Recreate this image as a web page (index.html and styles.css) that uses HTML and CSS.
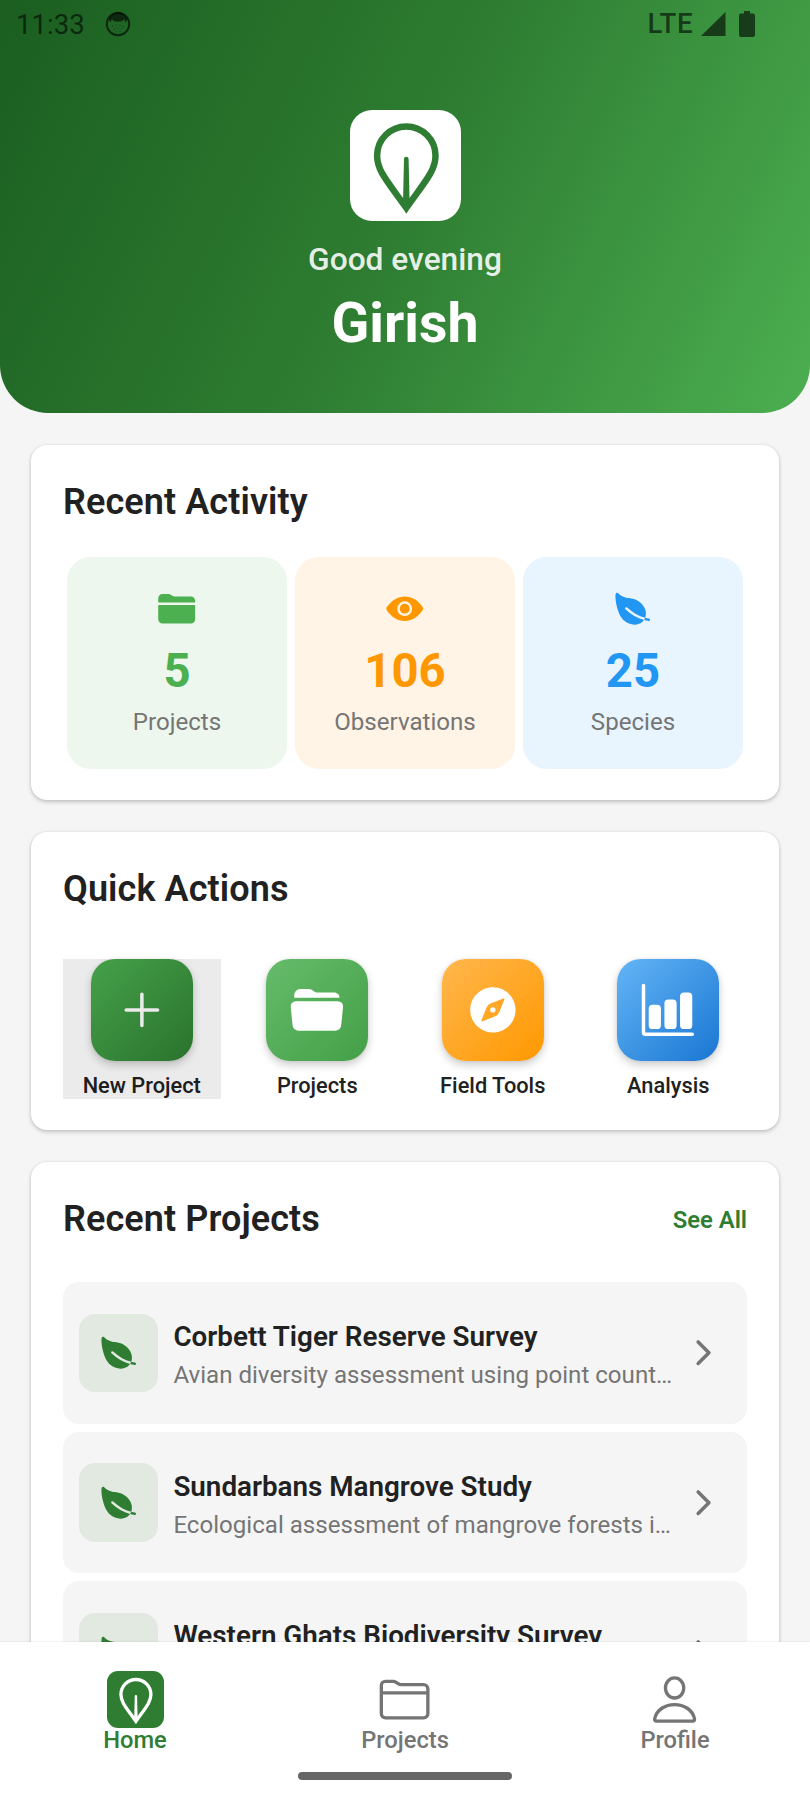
FILE: index.html
```html
<!DOCTYPE html>
<html lang="en">
<head>
  <meta charset="UTF-8">
  <title>Home</title>
  <link rel="stylesheet" href="styles.css">
</head>
<body>

<!-- shared icons -->
<svg class="sprite">
  <symbol id="logo" viewBox="0 0 111 111">
    <path d="M56.3 98C38 72 27.1 61 27.100 45.700A29.200 29.200 0 0 1 85.500 45.700C85.500 61 74.600 72 56.300 98z" fill="none" stroke="currentColor" stroke-width="6.5"/>
    <path d="M54 49a2.300 2.300 0 0 1 4.600 0L59.700 96h-6.800z" fill="currentColor"/>
  </symbol>
  <symbol id="leaf" viewBox="0 0 512 512">
    <path d="M161.35 242a16 16 0 0122.62-.68c73.63 69.36 147.51 111.56 234.45 133.07 11.73-32 12.77-67.22 2.64-101.58-13.44-45.59-44.74-85.31-90.49-114.86-40.84-26.38-81.66-33.25-121.15-39.89-49.82-8.38-96.88-16.3-141.79-63.85-5-5.26-11.81-7.37-18.32-5.66-7.44 2-12.43 7.88-14.82 17.6-5.6 22.75-2 86.51 13.75 153.82 25.29 108.14 65.65 162.86 95.06 189.73 38 34.69 87.62 53.9 136.93 53.9a186 186 0 0027.77-2.04c41.71-6.32 76.43-27.27 96-57.75-89.49-23.28-165.94-67.55-242-139.16a16 16 0 01-.65-22.65zM467.43 384.19c-16.83-2.59-33.13-5.84-49-9.77a157.71 157.71 0 01-12.13 25.68c-.73 1.25-1.5 2.49-2.29 3.71a584.21 584.21 0 0058.56 12 16 16 0 104.87-31.62z" fill="currentColor"/>
  </symbol>
  <symbol id="chevron" viewBox="0 0 512 512">
    <path d="M184 116l140 140-140 140" fill="none" stroke="currentColor" stroke-width="46" stroke-linecap="round" stroke-linejoin="round"/>
  </symbol>
</svg>

<div class="screen">
  <header class="hero">
    <div class="status-bar">
      <span class="time">11:33</span>
      <svg class="face" viewBox="0 0 26 26">
        <circle cx="13" cy="13" r="11.2" fill="none" stroke="currentColor" stroke-width="2"/>
        <path d="M3.500 8C6 3 10 1.500 13 1.500S20 3 22.500 8L20.500 11.500 19 8 17.500 10Q13 11.500 8.500 10L7 8 5.500 11.500z" fill="currentColor"/>
        <g fill="currentColor">
          <circle cx="7.500" cy="15" r=".6"/><circle cx="11" cy="14" r=".5"/><circle cx="15" cy="14.500" r=".6"/>
          <circle cx="18.500" cy="15.500" r=".5"/><circle cx="9.500" cy="18" r=".5"/><circle cx="13" cy="17" r=".5"/>
          <circle cx="15" cy="20" r=".6"/><circle cx="11.500" cy="20.500" r=".4"/><circle cx="17" cy="17.500" r=".4"/>
        </g>
      </svg>
      <span class="network">LTE</span>
      <svg class="signal" viewBox="0 0 25 24"><path d="M0 24L24.500 0v24z" fill="currentColor"/></svg>
      <svg class="battery" viewBox="0 0 16 26"><path d="M5 0h6v2.500h3a2 2 0 0 1 2 2V24a2 2 0 0 1-2 2H2a2 2 0 0 1-2-2V4.500a2 2 0 0 1 2-2h3z" fill="currentColor"/></svg>
    </div>
    <div class="logo"><svg><use href="#logo"/></svg></div>
    <div class="greeting">Good evening</div>
    <h1 class="user-name">Girish</h1>
  </header>

  <main>
    <section class="card">
      <h2>Recent Activity</h2>
      <div class="stats">
        <div class="stat green">
          <svg viewBox="0 0 512 512"><path d="M496 152a56 56 0 00-56-56H220.11a23.89 23.89 0 01-13.31-4L179 73.41A55.77 55.77 0 00147.89 64H72a56 56 0 00-56 56v48a8 8 0 008 8h464a8 8 0 008-8zM16 392a56 56 0 0056 56h368a56 56 0 0056-56V216a8 8 0 00-8-8H24a8 8 0 00-8 8z" fill="currentColor"/></svg>
          <div class="value">5</div>
          <div class="label">Projects</div>
        </div>
        <div class="stat orange">
          <svg viewBox="0 0 512 512" fill="currentColor"><circle cx="256" cy="256" r="64"/><path d="M490.840 238.600c-26.460-40.920-60.790-75.680-99.270-100.530C349 110.550 302 96 255.660 96c-42.520 0-84.330 12.150-124.270 36.110-40.730 24.430-77.630 60.120-109.680 106.070a31.920 31.920 0 00-.64 35.540c26.410 41.330 60.400 76.140 98.280 100.650C162 402 207.900 416 255.660 416c46.710 0 93.810-14.430 136.200-41.720 38.460-24.770 72.720-59.660 99.080-100.920a32.200 32.200 0 00-.1-34.760zM256 352a96 96 0 1196-96 96.110 96.110 0 01-96 96z"/></svg>
          <div class="value">106</div>
          <div class="label">Observations</div>
        </div>
        <div class="stat blue">
          <svg><use href="#leaf"/></svg>
          <div class="value">25</div>
          <div class="label">Species</div>
        </div>
      </div>
    </section>

    <section class="card">
      <h2>Quick Actions</h2>
      <div class="actions">
        <div class="action pressed">
          <div class="tile tile-new">
            <svg viewBox="0 0 512 512"><path d="M256 112v288M400 256H112" fill="none" stroke="currentColor" stroke-width="32" stroke-linecap="round"/></svg>
          </div>
          <span>New Project</span>
        </div>
        <div class="action">
          <div class="tile tile-projects">
            <svg viewBox="0 0 512 512"><path d="M408 96H252.110a23.890 23.890 0 01-13.310-4L211 73.410A55.770 55.770 0 00179.890 64H104a56.060 56.060 0 00-56 56v24h416c0-30.880-25.120-48-56-48zM423.750 448H88.250a56 56 0 01-55.930-55.150L16.180 228.110v-.28A48 48 0 0164 176h384.100a48 48 0 0147.800 51.830v.28L479.680 392.850A56 56 0 01423.750 448z" fill="currentColor"/></svg>
          </div>
          <span>Projects</span>
        </div>
        <div class="action">
          <div class="tile tile-tools">
            <svg viewBox="0 0 512 512" fill="currentColor"><circle cx="256" cy="256" r="24"/><path d="M256 48C141.310 48 48 141.310 48 256s93.310 208 208 208 208-93.310 208-208S370.690 48 256 48zm105.070 113.330l-46.880 117.200a64 64 0 01-35.660 35.660l-117.200 46.880a8 8 0 01-10.400-10.400l46.880-117.200a64 64 0 0135.660-35.660l117.200-46.880a8 8 0 0110.400 10.400z"/></svg>
          </div>
          <span>Field Tools</span>
        </div>
        <div class="action">
          <div class="tile tile-analysis">
            <svg viewBox="0 0 512 512" stroke="currentColor" stroke-width="32" stroke-linecap="round" stroke-linejoin="round">
              <path d="M32 32v432a16 16 0 0016 16h432" fill="none"/>
              <rect x="96" y="224" width="80" height="192" rx="20" fill="currentColor"/>
              <rect x="240" y="176" width="80" height="240" rx="20" fill="currentColor"/>
              <rect x="383.640" y="112" width="80" height="304" rx="20" fill="currentColor"/>
            </svg>
          </div>
          <span>Analysis</span>
        </div>
      </div>
    </section>

    <section class="card">
      <div class="card-head">
        <h2>Recent Projects</h2>
        <a class="see-all">See All</a>
      </div>
      <div class="projects">
        <div class="project">
          <div class="project-icon"><svg><use href="#leaf"/></svg></div>
          <div class="project-text">
            <h3>Corbett Tiger Reserve Survey</h3>
            <p>Avian diversity assessment using point count…</p>
          </div>
          <svg class="chevron"><use href="#chevron"/></svg>
        </div>
        <div class="project">
          <div class="project-icon"><svg><use href="#leaf"/></svg></div>
          <div class="project-text">
            <h3>Sundarbans Mangrove Study</h3>
            <p>Ecological assessment of mangrove forests i…</p>
          </div>
          <svg class="chevron"><use href="#chevron"/></svg>
        </div>
        <div class="project">
          <div class="project-icon"><svg><use href="#leaf"/></svg></div>
          <div class="project-text">
            <h3>Western Ghats Biodiversity Survey</h3>
            <p>&nbsp;</p>
          </div>
          <svg class="chevron"><use href="#chevron"/></svg>
        </div>
      </div>
    </section>
  </main>

  <nav class="bottom-nav">
    <div class="tabs">
      <div class="tab active">
        <div class="tab-icon"><div class="home-icon"><svg><use href="#logo"/></svg></div></div>
        <span>Home</span>
      </div>
      <div class="tab">
        <div class="tab-icon">
          <svg viewBox="0 0 512 512" fill="none" stroke="currentColor" stroke-width="32" stroke-linejoin="round"><path d="M440 432H72a40 40 0 01-40-40V120a40 40 0 0140-40h75.890a40 40 0 0122.190 6.720l27.840 18.560a40 40 0 0022.190 6.720H440a40 40 0 0140 40v240a40 40 0 01-40 40zM32 192h448"/></svg>
        </div>
        <span>Projects</span>
      </div>
      <div class="tab">
        <div class="tab-icon">
          <svg viewBox="0 0 512 512" fill="none" stroke="currentColor" stroke-width="32" stroke-linejoin="round"><ellipse cx="256" cy="144" rx="88" ry="97"/><path d="M256 304c-87 0-175.300 48-191.640 138.600C62.390 453.520 68.570 464 80 464h352c11.440 0 17.620-10.480 15.650-21.400C431.300 352 343 304 256 304z"/></svg>
        </div>
        <span>Profile</span>
      </div>
    </div>
    <div class="gesture-bar"></div>
  </nav>
</div>

</body>
</html>
```
FILE: styles.css
```css
* {
  box-sizing: border-box;
}
body {
  margin: 0;
  font-family: Roboto, sans-serif;
  background: #f5f5f5;
  color: #212121;
}
h1, h2, h3, p {
  margin: 0;
}
svg {
  display: block;
}
.sprite {
  display: none;
}
.screen {
  display: flex;
  flex-direction: column;
  width: 810px;
  height: 1800px;
  overflow: hidden;
}

/* header */
.hero {
  flex: none;
  display: flex;
  flex-direction: column;
  align-items: center;
  height: 413px;
  border-radius: 0 0 48px 48px;
  background: linear-gradient(117deg, #1b5e20, #2e7d32 50%, #4caf50);
  color: #fff;
}
.status-bar {
  display: flex;
  align-items: center;
  width: 100%;
  height: 47px;
  padding: 0 55px 0 16px;
  color: rgba(0, 0, 0, 0.6);
}
.time {
  font-size: 27.6px;
  line-height: 30px;
  padding-top: 3px;
}
.face {
  width: 26px;
  height: 26px;
  margin-left: 20px;
}
.network {
  margin-left: auto;
  font-size: 27.6px;
  font-weight: 500;
  line-height: 30px;
  letter-spacing: 0.5px;
}
.signal {
  width: 25px;
  height: 24px;
  margin-left: 8px;
}
.battery {
  width: 16px;
  height: 26px;
  margin-left: 13px;
}
.logo {
  width: 111px;
  height: 111px;
  margin-top: 63px;
  border-radius: 22px;
  background: #fff;
  color: #2e7d32;
}
.logo svg {
  width: 111px;
  height: 111px;
}
.greeting {
  margin-top: 18px;
  font-size: 31.7px;
  font-weight: 500;
  line-height: 42px;
  color: rgba(255, 255, 255, 0.9);
}
.user-name {
  margin-top: 9px;
  font-size: 55.5px;
  font-weight: 700;
  line-height: 68px;
}

/* cards */
main {
  flex: 1;
  min-height: 0;
  overflow: hidden;
  padding: 32px 31.5px 0 31px;
}
.card {
  margin-bottom: 32px;
  padding: 32px 31.5px 31px 32px;
  border-radius: 16px;
  background: #fff;
  box-shadow: 0 2px 4px rgba(0, 0, 0, 0.2), 0 0 3px rgba(0, 0, 0, 0.08);
}
h2 {
  font-size: 36px;
  font-weight: 600;
  line-height: 51px;
  letter-spacing: 0.1px;
}

/* stats */
.stats {
  display: grid;
  grid-template-columns: repeat(3, 1fr);
  gap: 8px;
  margin-top: 29px;
  padding: 0 4px;
}
.stat {
  display: flex;
  flex-direction: column;
  align-items: center;
  height: 212px;
  padding-top: 32px;
  border-radius: 24px;
}
.stat svg {
  width: 39.4px;
  height: 39.4px;
}
.value {
  margin-top: 15px;
  font-size: 47.3px;
  font-weight: 700;
  line-height: 56px;
}
.label {
  margin-top: 7px;
  font-size: 24.1px;
  line-height: 32px;
  color: #757575;
}
.green {
  background: #edf7ee;
  color: #4caf50;
}
.orange {
  background: #fff4e6;
  color: #ff9800;
}
.blue {
  background: #e8f4fe;
  color: #2196f3;
}

/* quick actions */
.actions {
  display: grid;
  grid-template-columns: repeat(4, 157.5px);
  justify-content: space-between;
  margin-top: 44px;
}
.action {
  position: relative;
  display: flex;
  flex-direction: column;
  align-items: center;
  height: 140px;
  font-size: 21.8px;
  font-weight: 500;
  line-height: 28px;
}
.pressed::after {
  content: "";
  position: absolute;
  inset: 0;
  background: rgba(0, 0, 0, 0.08);
}
.tile {
  flex: none;
  display: flex;
  align-items: center;
  justify-content: center;
  width: 102px;
  height: 102px;
  margin-bottom: 11px;
  border-radius: 24px;
  color: #fff;
  box-shadow: 0 4px 8px rgba(0, 0, 0, 0.2), 0 0 3px rgba(0, 0, 0, 0.08);
}
.tile svg {
  width: 55.8px;
  height: 55.8px;
}
.tile-new {
  background: linear-gradient(135deg, #4caf50, #2e7d32);
}
.tile-projects {
  background: linear-gradient(135deg, #66bb6a, #43a047);
}
.tile-tools {
  background: linear-gradient(135deg, #ffb74d, #ff9800);
}
.tile-analysis {
  background: linear-gradient(135deg, #64b5f6, #1976d2);
}

/* recent projects */
.card-head {
  display: flex;
  align-items: center;
  justify-content: space-between;
}
.see-all {
  font-size: 23.8px;
  font-weight: 600;
  color: #2e7d32;
}
.projects {
  display: flex;
  flex-direction: column;
  gap: 8px;
  margin-top: 37px;
}
.project {
  display: flex;
  align-items: center;
  height: 141.7px;
  padding: 0 23.5px 0 16px;
  border-radius: 16px;
  background: #f5f5f5;
}
.project-icon {
  display: flex;
  align-items: center;
  justify-content: center;
  width: 78.7px;
  height: 78.7px;
  border-radius: 16px;
  background: #e1e9e1;
  color: #2e7d32;
}
.project-icon svg {
  width: 39.4px;
  height: 39.4px;
}
.project-text {
  flex: 1;
  margin-left: 15.7px;
  white-space: nowrap;
}
.project-text h3 {
  font-size: 27.8px;
  font-weight: 600;
  line-height: 41px;
}
.project-text p {
  margin-top: 4px;
  font-size: 24.1px;
  line-height: 28.6px;
  color: #757575;
}
.chevron {
  width: 39.4px;
  height: 39.4px;
  color: #757575;
}

/* bottom nav */
.bottom-nav {
  flex: none;
  display: flex;
  flex-direction: column;
  align-items: center;
  height: 158px;
  padding-top: 29px;
  background: #fff;
  box-shadow: 0 0 2px rgba(0, 0, 0, 0.12);
  z-index: 1;
}
.tabs {
  display: grid;
  grid-template-columns: repeat(3, 1fr);
  width: 100%;
}
.tab {
  display: flex;
  flex-direction: column;
  align-items: center;
  font-size: 23.7px;
  font-weight: 500;
  line-height: 25px;
  color: #757575;
}
.tab-icon {
  display: flex;
  align-items: center;
  height: 57px;
}
.tab-icon > svg {
  width: 53.2px;
  height: 53.2px;
}
.active {
  color: #2e7d32;
}
.home-icon {
  width: 57px;
  height: 57px;
  border-radius: 11px;
  background: #2e7d32;
  color: #fff;
}
.home-icon svg {
  width: 57px;
  height: 57px;
}
.gesture-bar {
  width: 214px;
  height: 8px;
  margin-top: 19px;
  border-radius: 4px;
  background: #666;
}
```
